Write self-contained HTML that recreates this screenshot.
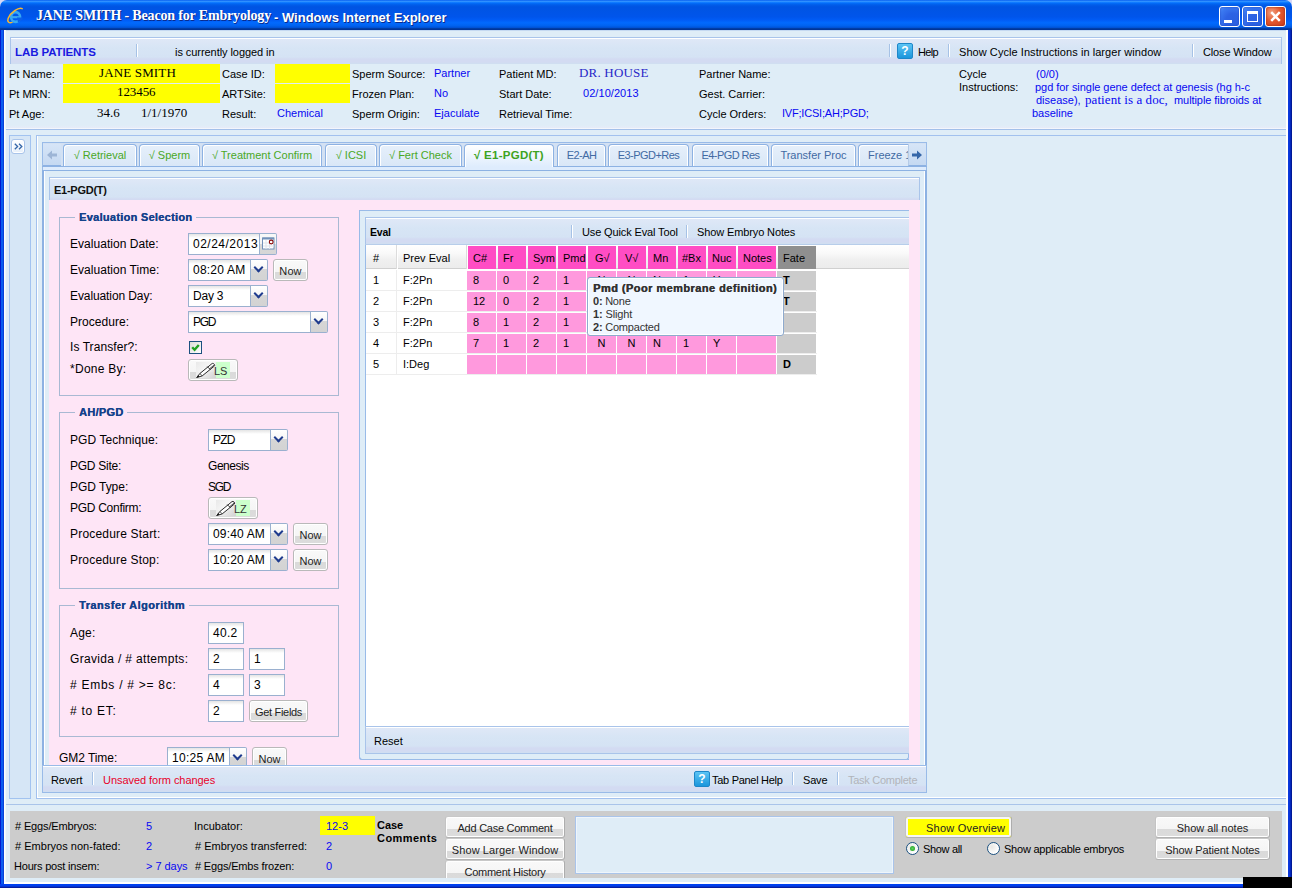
<!DOCTYPE html>
<html>
<head>
<meta charset="utf-8">
<title>JANE SMITH - Beacon for Embryology</title>
<style>
*{box-sizing:border-box;margin:0;padding:0}
html,body{width:1292px;height:888px;overflow:hidden}
html{background:#fff}
body{position:relative;background:#0a4fe0;font-family:"Liberation Sans",sans-serif;font-size:11px;color:#000}
.a{position:absolute}
.t{position:absolute;white-space:nowrap;font-size:11px;line-height:14px;color:#000}
.b{color:#0808f2}
.l{position:absolute;white-space:nowrap;font-size:12px;line-height:16px;color:#000;letter-spacing:.1px}
.tb{background:linear-gradient(#e0e8f7 0,#d7e5f5 10px,#d5e3f4 19px,#d3dbf2 21px,#d3dbf2 24px,#cfdff1 26px,#cfdff1 100%);border:1px solid #a9c4ea}
.sep{position:absolute;width:2px;border-left:1px solid #a6c2e6;border-right:1px solid #fff}
.in{position:absolute;background:#fff linear-gradient(#e4e4e4,#fff 4px);border:1px solid #9ab0cf;font-size:12px;line-height:21px;padding-left:4px;white-space:nowrap;letter-spacing:.3px;color:#000;overflow:hidden}
.tr{position:absolute;width:17px;height:22px;border:1px solid #9ab0cf;border-left:none;border-radius:0 2px 2px 0;background:linear-gradient(#fff 0%,#f6f6f6 43%,#d6d6d6 44%,#d3d3d3 100%)}
.tr:after{content:"";position:absolute;box-sizing:border-box;left:4.1px;top:3.6px;width:7px;height:7px;border-right:2.7px solid #1f3b8e;border-bottom:2.7px solid #1f3b8e;transform:rotate(45deg)}
.btn{position:absolute;border:1px solid #b9b9b9;border-radius:3px;background:linear-gradient(#f9f9f9 0%,#f5f5f5 59%,#dadada 60%,#dcdcdc 100%);box-shadow:inset 0 0 0 1px #fff;font-size:11px;line-height:23px;text-align:center;color:#222;white-space:nowrap}
.sb{border-color:#c8c8c8 #adadad #b2b2b2 #c4c4c4}
.fs{position:absolute;border:1px solid #a9b9d3}
.lg{position:absolute;text-shadow:.35px 0 0 #15428b;font-weight:bold;font-size:11px;line-height:14px;color:#15428b;background:#fee5f6;padding:0 4px;white-space:nowrap;letter-spacing:.2px}
</style>
</head>
<body>
<!-- title bar -->
<div class="a" style="left:0;top:0;width:8px;height:8px;background:#d5d8f8"></div><div class="a" style="left:1284px;top:0;width:8px;height:8px;background:#d5d8f8"></div>
<div class="a" id="title" style="left:0;top:0;width:1292px;height:30px;background:linear-gradient(to bottom,#0058ee 0%,#3593ff 4%,#288eff 6%,#127dff 8%,#036ffc 10%,#0262ee 14%,#0057e5 20%,#0054e3 24%,#0055eb 56%,#005bf5 66%,#026afe 76%,#0062ef 86%,#0052d6 92%,#0040ab 94%,#003092 100%);border-radius:7px 7px 0 0"></div>
<svg class="a" style="left:6px;top:6px" width="19" height="19" viewBox="0 0 19 19">
<ellipse cx="9.6" cy="11" rx="4.5" ry="4.9" fill="none" stroke="#38a8f2" stroke-width="2.6"/>
<path d="M5.5 11.2h8.5" stroke="#38a8f2" stroke-width="2.2"/>
<path d="M11 11.6l5.5 0 0 2.2-4.5 2.6z" fill="#0a60ea"/>
<path d="M16.2 2.6C12.5 1 4.5 6.5 2.2 12.2c-1.3 3.4.8 5.2 3.8 4.2" fill="none" stroke="#f8b830" stroke-width="1.5" stroke-linecap="round"/>
</svg>
<div class="a" style="left:36px;top:6px;font-family:'Liberation Serif',serif;font-weight:bold;font-size:14px;letter-spacing:-.16px;line-height:20px;color:#fff;white-space:nowrap;text-shadow:1px 1px 0 #0a2a8c" id="tt1">JANE SMITH - Beacon for Embryology</div>
<div class="a" style="left:274px;top:8px;font-weight:bold;font-size:13px;line-height:20px;color:#fff;white-space:nowrap;text-shadow:1px 1px 0 #0a2a8c" id="tt2">- Windows Internet Explorer</div>
<!-- window buttons -->
<div class="a" style="left:1219px;top:6px;width:21px;height:21px;border:1px solid #fff;border-radius:3px;background:radial-gradient(circle at 70% 75%,#2a5fe0 0%,#2d62e4 40%,#3a78f0 75%,#5590f8 100%);box-shadow:inset 0 0 2px #1b3fb8"><div class="a" style="left:4px;top:13px;width:8px;height:3px;background:#fff"></div></div>
<div class="a" style="left:1242px;top:6px;width:21px;height:21px;border:1px solid #fff;border-radius:3px;background:radial-gradient(circle at 70% 75%,#2a5fe0 0%,#2d62e4 40%,#3a78f0 75%,#5590f8 100%);box-shadow:inset 0 0 2px #1b3fb8"><div class="a" style="left:4px;top:4px;width:11px;height:11px;border:1px solid #fff;border-top:3px solid #fff"></div></div>
<div class="a" style="left:1265px;top:6px;width:21px;height:21px;border:1px solid #fff;border-radius:3px;background:radial-gradient(circle at 30% 30%,#f0a080 0%,#e4592e 45%,#c6391a 100%);box-shadow:inset 0 0 2px #8a2510"><svg class="a" style="left:3px;top:3px" width="13" height="13" viewBox="0 0 13 13"><path d="M2.2 2.2l8.6 8.6M10.8 2.2l-8.6 8.6" stroke="#fff" stroke-width="2.5" stroke-linecap="butt"/></svg></div>
<!-- window borders -->
<div class="a" style="left:0;top:30px;width:4px;height:858px;background:linear-gradient(to right,#0019cf 0,#0019cf 1px,#0a5cf0 1px,#0a5cf0 3px,#0742d8 3px)"></div>
<div class="a" style="left:1288px;top:30px;width:4px;height:858px;background:linear-gradient(to right,#0a3ddc 0,#0831d9 2px,#001ea0 3px,#00138c 4px)"></div>
<div class="a" style="left:0;top:884px;width:1292px;height:4px;background:linear-gradient(#0041f2 0,#0040ee 2px,#0a28b4 3px,#00138c 4px)"></div>
<!-- content -->
<div class="a" id="content" style="left:4px;top:30px;width:1284px;height:854px;background:#dfedf7;border-left:1px solid #fbfdfe;border-right:2px solid #fff;box-shadow:inset 1px 0 0 #eef6fb"></div>
<!-- header panel -->
<div class="a" style="left:6px;top:30px;width:1280px;height:100px;border-bottom:1px solid #a3c0ea;border-top:1px solid #c5d9f1;background:linear-gradient(#dfedf7 0,#dfedf7 94px,#e6ecf8 97px,#fff 98px)"></div>
<div class="a tb" style="left:10px;top:37px;width:1272px;height:27px;border-bottom:none;box-shadow:inset 0 1px 0 #fff"></div>
<div class="t" id="h1" style="left:15px;top:45px;font-weight:bold;font-size:11.5px;color:#1a1ae0;letter-spacing:-.1px">LAB PATIENTS</div>
<div class="sep" style="left:136px;top:44px;height:13px"></div>
<div class="t" id="h2" style="letter-spacing:-0.06px;left:175px;top:45px">is currently logged in</div>
<div class="sep" style="left:889px;top:44px;height:13px"></div>
<div class="a" style="left:897px;top:43px;width:16px;height:16px;border-radius:2px;border:1px solid #1d87c9;background:linear-gradient(#5cc4f4,#1b96dc);color:#fff;font-weight:bold;font-size:12px;line-height:14px;text-align:center">?</div>
<div class="t" id="h3" style="letter-spacing:-0.66px;left:918px;top:45px">Help</div>
<div class="sep" style="left:948px;top:44px;height:13px"></div>
<div class="t" id="h4" style="letter-spacing:0.06px;left:959px;top:45px">Show Cycle Instructions in larger window</div>
<div class="sep" style="left:1192px;top:44px;height:13px"></div>
<div class="t" id="h5" style="letter-spacing:-0.15px;left:1203px;top:45px">Close Window</div>
<!-- patient rows -->
<div class="a" style="left:63px;top:64px;width:157px;height:19px;background:#ffff00"></div>
<div class="a" style="left:63px;top:84px;width:157px;height:19px;background:#ffff00"></div>
<div class="a" style="left:275px;top:64px;width:75px;height:19px;background:#ffff00"></div>
<div class="a" style="left:275px;top:84px;width:75px;height:19px;background:#ffff00"></div>
<div class="t" id="p1" style="left:9px;top:67px">Pt Name:</div>
<div class="t" id="p2" style="left:9px;top:87px">Pt MRN:</div>
<div class="t" id="p3" style="left:9px;top:107px">Pt Age:</div>
<div class="t" id="p4" style="letter-spacing:0.15px;left:99px;top:66px;font-family:'Liberation Serif',serif;font-size:13px">JANE SMITH</div>
<div class="t" id="p5" style="letter-spacing:-0.08px;left:117px;top:85px;font-family:'Liberation Serif',serif;font-size:13px">123456</div>
<div class="t" id="p6" style="left:97px;top:106px;font-family:'Liberation Serif',serif;font-size:13px">34.6</div>
<div class="t" id="p7" style="left:141px;top:106px;font-family:'Liberation Serif',serif;font-size:13px">1/1/1970</div>
<div class="t" id="p8" style="left:222px;top:67px">Case ID:</div>
<div class="t" id="p9" style="left:222px;top:87px">ARTSite:</div>
<div class="t" id="p10" style="left:222px;top:107px">Result:</div>
<div class="t b" id="p11" style="left:277px;top:106px">Chemical</div>
<div class="t" id="p12" style="left:352px;top:67px">Sperm Source:</div>
<div class="t" id="p13" style="left:352px;top:87px">Frozen Plan:</div>
<div class="t" id="p14" style="left:352px;top:107px">Sperm Origin:</div>
<div class="t b" id="p15" style="left:434px;top:66px">Partner</div>
<div class="t b" id="p16" style="left:434px;top:86px">No</div>
<div class="t b" id="p17" style="left:434px;top:106px">Ejaculate</div>
<div class="t" id="p18" style="left:499px;top:67px">Patient MD:</div>
<div class="t" id="p19" style="left:499px;top:87px">Start Date:</div>
<div class="t" id="p20" style="left:499px;top:107px">Retrieval Time:</div>
<div class="t" id="p21" style="left:579px;top:66px;letter-spacing:.2px;font-family:'Liberation Serif',serif;font-size:13px;color:#2828c8">DR. HOUSE</div>
<div class="t b" id="p22" style="letter-spacing:0.06px;left:583px;top:86px">02/10/2013</div>
<div class="t" id="p23" style="left:699px;top:67px">Partner Name:</div>
<div class="t" id="p24" style="left:699px;top:87px">Gest. Carrier:</div>
<div class="t" id="p25" style="left:699px;top:107px">Cycle Orders:</div>
<div class="t b" id="p26" style="left:782px;top:106px;letter-spacing:-.2px">IVF;ICSI;AH;PGD;</div>
<div class="t" id="p27" style="left:959px;top:67px">Cycle</div>
<div class="t" id="p28" style="left:959px;top:80px">Instructions:</div>
<div class="t b" id="p29" style="left:1036px;top:67px">(0/0)</div>
<div class="t b" id="p30" style="letter-spacing:-0.05px;left:1035px;top:80px">pgd for single gene defect at genesis (hg h-c</div>
<div class="t b" id="p31" style="left:1036px;top:93px">disease),</div>
<div class="t b" id="p32" style="letter-spacing:0.08px;left:1085px;top:93px;font-family:'Liberation Serif',serif;font-size:13px">patient is a doc,</div>
<div class="t b" id="p33" style="letter-spacing:-0.07px;left:1174px;top:93px">multiple fibroids at</div>
<div class="t b" id="p34" style="left:1032px;top:106px">baseline</div>
<!-- left collapsed -->
<div class="a" style="left:9px;top:135px;width:22px;height:664px;border:1px solid #a2c3f0;background:#d6e6f6"></div>
<div class="a" style="left:11px;top:139px;width:14px;height:15px;border:1px solid #a9c4ea;border-radius:3px;background:linear-gradient(#fff,#e6effa);box-shadow:inset 0 0 0 1px #fff"><svg class="a" style="left:2px;top:3px" width="9" height="7" viewBox="0 0 9 7"><path d="M.8.8L3.6 3.5.8 6.2M5 .8l2.8 2.7L5 6.2" fill="none" stroke="#3566a8" stroke-width="1.3"/></svg></div>
<!-- center panel -->
<div class="a" style="left:36px;top:135px;width:1250px;height:664px;border:1px solid #a2c1ee;border-right:none;background:#dfedf7;box-shadow:inset 1px -1px 0 #fff"></div>
<!-- tab panel -->
<div class="a" style="left:42px;top:142px;width:885px;height:25px;border:1px solid #99bbe8;background:#d3e1f3"></div>
<div class="a" style="left:42px;top:167px;width:885px;height:3px;border:1px solid #99bbe8;border-top:none;border-bottom:none;background:#deecfd"></div>
<div class="a" style="left:42px;top:166px;width:885px;height:1px;background:#8db2e3"></div>
<div class="a" style="left:42px;top:170px;width:885px;height:596px;border:1px solid #8db2e3;border-left-width:2px;border-right-width:2px;background:#dfedf7;box-shadow:inset -1px 0 0 #fff,inset 1px 0 0 #fff"></div>
<style>
.tab{position:absolute;top:144px;height:22px;border:1px solid #8db2e3;border-bottom:none;border-radius:4px 4px 0 0;background:linear-gradient(#e6f0fb,#d9e7f7);box-shadow:inset 1px 1px 0 #fff,inset -1px 0 0 #fff;font-size:11px;line-height:21px;text-align:center;color:#416aa3;white-space:nowrap;overflow:hidden}
.tab.g{color:#4aa826}
.tab.act{height:23px;font-size:11.5px;letter-spacing:.25px;background:linear-gradient(#fff,#deecfd);font-weight:bold;color:#3da322;z-index:2}
</style>
<div class="a" style="left:43px;top:144px;width:18px;height:22px;border-bottom:1px solid #8db2e3;background:linear-gradient(#d6e5f7,#c5d9f2)"><svg class="a" style="left:4px;top:6px" width="10" height="10" viewBox="0 0 10 10"><path d="M0 5l5-4.5v3h5v3H5v3z" fill="#9db5d6"/></svg></div>
<div class="tab g" style="left:63px;width:74px"><span id="tb1">√ Retrieval</span></div>
<div class="tab g" style="left:139px;width:61px"><span id="tb2">√ Sperm</span></div>
<div class="tab g" style="left:202px;width:120px"><span id="tb3">√ Treatment Confirm</span></div>
<div class="tab g" style="left:325px;width:52px"><span id="tb4">√ ICSI</span></div>
<div class="tab g" style="left:379px;width:83px"><span id="tb5">√ Fert Check</span></div>
<div class="tab act" style="left:464px;width:90px"><span id="tb6">√ E1-PGD(T)</span></div>
<div class="tab" style="left:557px;width:49px"><span id="tb7" style="letter-spacing:-.55px">E2-AH</span></div>
<div class="tab" style="left:608px;width:81px"><span id="tb8" style="letter-spacing:-.55px">E3-PGD+Res</span></div>
<div class="tab" style="left:692px;width:77px"><span id="tb9" style="letter-spacing:-.55px">E4-PGD Res</span></div>
<div class="tab" style="left:771px;width:85px"><span id="tb10">Transfer Proc</span></div>
<div class="tab" style="left:858px;width:51px;text-align:left;padding-left:9px;border-right:none;border-radius:4px 0 0 0;box-shadow:inset 1px 1px 0 #fff"><span id="tb11">Freeze 1</span></div>
<div class="a" style="left:908px;top:144px;width:18px;height:22px;border-bottom:1px solid #8db2e3;border-left:1px solid #b5cbe8;background:linear-gradient(#d6e5f7,#c5d9f2);z-index:3"><svg class="a" style="left:3px;top:6px" width="10" height="10" viewBox="0 0 10 10"><path d="M10 5L5 .5v3H0v3h5v3z" fill="#3566a8"/></svg></div>
<!-- inner panel -->
<div class="a tb" style="left:49px;top:177px;width:871px;height:23px;border-bottom:none;box-shadow:inset 0 1px 0 #fff"></div>
<div class="t" id="ih" style="left:54px;top:183px;font-weight:bold;color:#111;letter-spacing:-.25px">E1-PGD(T)</div>
<div class="a" id="pink" style="left:49px;top:200px;width:871px;height:565px;background:#fee5f6"></div>
<!-- fieldset 1 -->
<div class="fs" style="left:59px;top:217px;width:280px;height:179px"></div>
<div class="lg" id="lg1" style="letter-spacing:0.28px;left:75px;top:210px">Evaluation Selection</div>
<div class="l" id="f1" style="letter-spacing:0.04px;left:70px;top:236px">Evaluation Date:</div>
<div class="l" id="f2" style="letter-spacing:0.04px;left:70px;top:262px">Evaluation Time:</div>
<div class="l" id="f3" style="letter-spacing:-0.1px;left:70px;top:288px">Evaluation Day:</div>
<div class="l" id="f4" style="letter-spacing:0.03px;left:70px;top:314px">Procedure:</div>
<div class="l" id="f5" style="letter-spacing:0.07px;left:70px;top:339px">Is Transfer?:</div>
<div class="l" id="f6" style="letter-spacing:0.27px;left:70px;top:361px">*Done By:</div>
<div class="in" style="left:188px;top:233px;width:72px;height:22px"><span id="i1" style="letter-spacing:0.5px">02/24/2013</span></div>
<div class="a" style="left:260px;top:233px;width:17px;height:22px;border:1px solid #9ab0cf;border-left:none;border-radius:0 2px 2px 0;background:linear-gradient(#f8f8f8 0%,#f4f4f4 49%,#d8d8d8 50%,#d6d6d6 100%)"><svg class="a" style="left:2px;top:3px" width="13" height="13" viewBox="0 0 13 13"><rect x=".5" y="1" width="11.5" height="11" fill="#fff" stroke="#7391b9"/><rect x=".5" y=".5" width="11.5" height="2" fill="#7391b9"/><path d="M4 3v9M7.5 3v9M1 6h11M1 9h11" stroke="#dfe4ec" stroke-width="1"/><circle cx="9.2" cy="5" r="1.9" fill="#fff" stroke="#8b0a0a" stroke-width="1.1"/></svg></div>
<div class="in" style="left:188px;top:259px;width:63px;height:22px"><span id="i2" style="letter-spacing:0.22px">08:20 AM</span></div><div class="tr" style="left:251px;top:259px"></div>
<div class="btn" style="left:273px;top:259px;width:35px;height:22px"><span id="b1" style="letter-spacing:0.09px">Now</span></div>
<div class="in" style="left:188px;top:285px;width:63px;height:22px"><span id="i3" style="letter-spacing:-0.23px">Day 3</span></div><div class="tr" style="left:251px;top:285px"></div>
<div class="in" style="left:188px;top:311px;width:123px;height:22px"><span id="i4" style="letter-spacing:-1.24px">PGD</span></div><div class="tr" style="left:311px;top:311px"></div>
<div class="a" style="left:189px;top:341px;width:13px;height:13px;border:1px solid #1c5180;background:linear-gradient(135deg,#dcdcd7,#fff)"><svg class="a" style="left:1px;top:1px" width="9" height="9" viewBox="0 0 9 9"><path d="M1.2 4.2l2.4 2.6L7.8 2" fill="none" stroke="#21a121" stroke-width="2.4"/></svg></div>
<div class="btn" style="left:188px;top:359px;width:50px;height:22px"></div>
<div class="a" style="left:196px;top:362px;width:20px;height:16px;background:linear-gradient(135deg,#e6e6e6 0%,#f6f6f6 45%,#f0f0f0 55%,#cfcfcf 100%);opacity:.85"></div>
<div class="a" style="left:216px;top:362px;width:14px;height:16px;background:#ccffcc"></div>
<svg class="a" style="left:196px;top:362px" width="20" height="16" viewBox="0 0 20 16"><path d="M3.9 11.5L15.9 1.7C17.2 .6 19.5 2.8 18.3 4.1L6.2 13.9L.6 15.6z" fill="#fff" stroke="#2a2a2a" stroke-width="1"/><path d="M.6 15.6l1.7-2.6 1.3 1.7z" fill="#1a1a1a"/><path d="M3.9 11.5l2.3 2.4" stroke="#2a2a2a" stroke-width=".8"/><path d="M11.3 4.6l3.2 3.2M13.3 7l4.6-3.8" stroke="#2a2a2a" stroke-width=".9" fill="none"/></svg>
<div class="t" id="ls" style="left:214px;top:364px;font-size:11px;color:#333">LS</div>
<!-- fieldset 2 -->
<div class="fs" style="left:59px;top:412px;width:280px;height:177px"></div>
<div class="lg" id="lg2" style="letter-spacing:0.27px;left:75px;top:405px">AH/PGD</div>
<div class="l" id="f7" style="letter-spacing:0.07px;left:70px;top:432px">PGD Technique:</div>
<div class="l" id="f8" style="letter-spacing:-0.26px;left:70px;top:458px">PGD Site:</div>
<div class="l" id="f9" style="letter-spacing:-0.03px;left:70px;top:479px">PGD Type:</div>
<div class="l" id="f10" style="letter-spacing:-0.28px;left:70px;top:500px">PGD Confirm:</div>
<div class="l" id="f11" style="letter-spacing:0.19px;left:70px;top:526px">Procedure Start:</div>
<div class="l" id="f12" style="letter-spacing:0.18px;left:70px;top:552px">Procedure Stop:</div>
<div class="in" style="left:208px;top:429px;width:63px;height:22px"><span id="i5" style="letter-spacing:-0.83px">PZD</span></div><div class="tr" style="left:271px;top:429px"></div>
<div class="l" id="f13" style="letter-spacing:-0.45px;left:208px;top:458px">Genesis</div>
<div class="l" id="f14" style="letter-spacing:-1.24px;left:208px;top:479px">SGD</div>
<div class="btn" style="left:208px;top:497px;width:50px;height:22px"></div>
<div class="a" style="left:216px;top:500px;width:20px;height:16px;background:linear-gradient(135deg,#e6e6e6 0%,#f6f6f6 45%,#f0f0f0 55%,#cfcfcf 100%);opacity:.85"></div>
<div class="a" style="left:236px;top:500px;width:14px;height:16px;background:#ccffcc"></div>
<svg class="a" style="left:216px;top:500px" width="20" height="16" viewBox="0 0 20 16"><path d="M3.9 11.5L15.9 1.7C17.2 .6 19.5 2.8 18.3 4.1L6.2 13.9L.6 15.6z" fill="#fff" stroke="#2a2a2a" stroke-width="1"/><path d="M.6 15.6l1.7-2.6 1.3 1.7z" fill="#1a1a1a"/><path d="M3.9 11.5l2.3 2.4" stroke="#2a2a2a" stroke-width=".8"/><path d="M11.3 4.6l3.2 3.2M13.3 7l4.6-3.8" stroke="#2a2a2a" stroke-width=".9" fill="none"/></svg>
<div class="t" id="lz" style="left:234px;top:502px;font-size:11px;color:#333">LZ</div>
<div class="in" style="left:208px;top:523px;width:63px;height:22px"><span id="i6" style="letter-spacing:0.16px">09:40 AM</span></div><div class="tr" style="left:271px;top:523px"></div>
<div class="btn" style="left:293px;top:523px;width:35px;height:22px">Now</div>
<div class="in" style="left:208px;top:549px;width:63px;height:22px"><span id="i7" style="letter-spacing:0.16px">10:20 AM</span></div><div class="tr" style="left:271px;top:549px"></div>
<div class="btn" style="left:293px;top:549px;width:35px;height:22px">Now</div>
<!-- fieldset 3 -->
<div class="fs" style="left:59px;top:605px;width:280px;height:132px"></div>
<div class="lg" id="lg3" style="letter-spacing:0.44px;left:75px;top:598px">Transfer Algorithm</div>
<div class="l" id="f15" style="letter-spacing:0.2px;left:70px;top:625px">Age:</div>
<div class="l" id="f16" style="letter-spacing:0.33px;left:70px;top:651px">Gravida / # attempts:</div>
<div class="l" id="f17" style="letter-spacing:0.73px;left:70px;top:677px"># Embs / # &gt;= 8c:</div>
<div class="l" id="f18" style="letter-spacing:0.74px;left:70px;top:703px"># to ET:</div>
<div class="in" style="left:208px;top:622px;width:36px;height:22px">40.2</div>
<div class="in" style="left:208px;top:648px;width:36px;height:22px">2</div><div class="in" style="left:249px;top:648px;width:36px;height:22px">1</div>
<div class="in" style="left:208px;top:674px;width:36px;height:22px">4</div><div class="in" style="left:249px;top:674px;width:36px;height:22px">3</div>
<div class="in" style="left:208px;top:700px;width:36px;height:22px">2</div>
<div class="btn" style="left:249px;top:700px;width:59px;height:22px"><span id="b2" style="letter-spacing:-0.31px">Get Fields</span></div>
<!-- GM2 -->
<div class="l" id="f19" style="letter-spacing:-0.05px;left:59px;top:750px">GM2 Time:</div>
<div class="a" style="left:160px;top:745px;width:140px;height:20px;overflow:hidden">
<div class="in" style="left:7px;top:2px;width:63px;height:22px">10:25 AM</div><div class="tr" style="left:70px;top:2px"></div>
<div class="btn" style="left:92px;top:2px;width:35px;height:22px;line-height:23px">Now</div>
</div>
<!-- grid -->
<div class="a" style="left:359px;top:210px;width:550px;height:550px;border:1px solid #99bbe8;border-right:none;background:#dfedf7;border-radius:0 0 0 3px"></div>
<div class="a" style="left:359px;top:753px;width:550px;height:7px;border:1px solid #99bbe8;border-top:none;border-radius:0 0 3px 3px"></div>
<div class="a" style="left:365px;top:217px;width:544px;height:537px;border:1px solid #99bbe8;border-right:none;background:#fff"></div>
<div class="a tb" style="left:365px;top:217px;width:544px;height:28px;border-right:none;border-bottom:1px solid #b7cdea;box-shadow:inset 0 1px 0 #fff"></div>
<div class="t" id="g1" style="left:370px;top:225px;font-weight:bold;font-size:10.5px;letter-spacing:-.2px">Eval</div>
<div class="sep" style="left:571px;top:225px;height:13px"></div>
<div class="t" id="g2" style="letter-spacing:-0.13px;left:582px;top:225px">Use Quick Eval Tool</div>
<div class="sep" style="left:686px;top:225px;height:13px"></div>
<div class="t" id="g3" style="letter-spacing:-0.12px;left:697px;top:225px">Show Embryo Notes</div>
<div class="a" style="left:366px;top:245px;width:543px;height:24px;background:linear-gradient(#fff 0%,#f9f9f9 38%,#f0f0f0 62%,#ececec 100%);border-bottom:1px solid #d0d0d0"></div>
<div class="a" style="left:396px;top:245px;width:2px;height:24px;border-left:1px solid #dcdcdc;border-right:1px solid #fff"></div>
<div class="a" style="left:466px;top:245px;width:2px;height:24px;border-left:1px solid #dcdcdc;border-right:1px solid #fff"></div>
<div class="t" id="gh0" style="left:373px;top:251px">#</div>
<div class="t" id="gh1" style="left:403px;top:251px">Prev Eval</div>
<div class="a" style="left:468px;top:246px;width:28px;height:23px;background:#ff4dc4"></div>
<div class="t" style="left:473px;top:251px">C#</div>
<div class="a" style="left:498px;top:246px;width:28px;height:23px;background:#ff4dc4"></div>
<div class="t" style="left:503px;top:251px">Fr</div>
<div class="a" style="left:528px;top:246px;width:28px;height:23px;background:#ff4dc4"></div>
<div class="t" style="left:533px;top:251px">Sym</div>
<div class="a" style="left:558px;top:246px;width:28px;height:23px;background:#ff4dc4"></div>
<div class="t" style="left:563px;top:251px">Pmd</div>
<div class="a" style="left:588px;top:246px;width:28px;height:23px;background:#ff4dc4"></div>
<div class="t" style="left:595px;top:251px">G√</div>
<div class="a" style="left:618px;top:246px;width:28px;height:23px;background:#ff4dc4"></div>
<div class="t" style="left:625px;top:251px">V√</div>
<div class="a" style="left:648px;top:246px;width:28px;height:23px;background:#ff4dc4"></div>
<div class="t" style="left:653px;top:251px">Mn</div>
<div class="a" style="left:678px;top:246px;width:28px;height:23px;background:#ff4dc4"></div>
<div class="t" style="left:682px;top:251px">#Bx</div>
<div class="a" style="left:708px;top:246px;width:28px;height:23px;background:#ff4dc4"></div>
<div class="t" style="left:712px;top:251px">Nuc</div>
<div class="a" style="left:738px;top:246px;width:38px;height:23px;background:#ff4dc4"></div>
<div class="t" style="left:743px;top:251px">Notes</div>
<div class="a" style="left:778px;top:246px;width:38px;height:23px;background:#8f8f8f"></div>
<div class="t" style="left:783px;top:251px">Fate</div>
<div class="a" style="left:366px;top:290px;width:451px;height:2px;border-top:1px solid #ededed;background:#fff"></div>
<div class="t" style="left:373px;top:273px">1</div>
<div class="t" style="left:403px;top:273px">F:2Pn</div>
<div class="a" style="left:467px;top:271px;width:29px;height:19px;background:#ff99dd"></div>
<div class="t" style="left:473px;top:273px">8</div>
<div class="a" style="left:497px;top:271px;width:29px;height:19px;background:#ff99dd"></div>
<div class="t" style="left:503px;top:273px">0</div>
<div class="a" style="left:527px;top:271px;width:29px;height:19px;background:#ff99dd"></div>
<div class="t" style="left:533px;top:273px">2</div>
<div class="a" style="left:557px;top:271px;width:29px;height:19px;background:#ff99dd"></div>
<div class="t" style="left:563px;top:273px">1</div>
<div class="a" style="left:587px;top:271px;width:29px;height:19px;background:#ff99dd"></div>
<div class="t" style="left:587px;top:273px;width:29px;text-align:center">N</div>
<div class="a" style="left:617px;top:271px;width:29px;height:19px;background:#ff99dd"></div>
<div class="t" style="left:617px;top:273px;width:29px;text-align:center">N</div>
<div class="a" style="left:647px;top:271px;width:29px;height:19px;background:#ff99dd"></div>
<div class="t" style="left:653px;top:273px">N</div>
<div class="a" style="left:677px;top:271px;width:29px;height:19px;background:#ff99dd"></div>
<div class="t" style="left:683px;top:273px">1</div>
<div class="a" style="left:707px;top:271px;width:29px;height:19px;background:#ff99dd"></div>
<div class="t" style="left:713px;top:273px">Y</div>
<div class="a" style="left:737px;top:271px;width:39px;height:19px;background:#ff99dd"></div>
<div class="a" style="left:777px;top:271px;width:39px;height:19px;background:#cccccc"></div>
<div class="t" style="left:783px;top:273px;font-weight:bold">T</div>
<div class="a" style="left:366px;top:311px;width:451px;height:2px;border-top:1px solid #ededed;background:#fff"></div>
<div class="t" style="left:373px;top:294px">2</div>
<div class="t" style="left:403px;top:294px">F:2Pn</div>
<div class="a" style="left:467px;top:292px;width:29px;height:19px;background:#ff99dd"></div>
<div class="t" style="left:473px;top:294px">12</div>
<div class="a" style="left:497px;top:292px;width:29px;height:19px;background:#ff99dd"></div>
<div class="t" style="left:503px;top:294px">0</div>
<div class="a" style="left:527px;top:292px;width:29px;height:19px;background:#ff99dd"></div>
<div class="t" style="left:533px;top:294px">2</div>
<div class="a" style="left:557px;top:292px;width:29px;height:19px;background:#ff99dd"></div>
<div class="t" style="left:563px;top:294px">1</div>
<div class="a" style="left:587px;top:292px;width:29px;height:19px;background:#ff99dd"></div>
<div class="t" style="left:587px;top:294px;width:29px;text-align:center">N</div>
<div class="a" style="left:617px;top:292px;width:29px;height:19px;background:#ff99dd"></div>
<div class="t" style="left:617px;top:294px;width:29px;text-align:center">N</div>
<div class="a" style="left:647px;top:292px;width:29px;height:19px;background:#ff99dd"></div>
<div class="t" style="left:653px;top:294px">N</div>
<div class="a" style="left:677px;top:292px;width:29px;height:19px;background:#ff99dd"></div>
<div class="t" style="left:683px;top:294px">1</div>
<div class="a" style="left:707px;top:292px;width:29px;height:19px;background:#ff99dd"></div>
<div class="t" style="left:713px;top:294px">Y</div>
<div class="a" style="left:737px;top:292px;width:39px;height:19px;background:#ff99dd"></div>
<div class="a" style="left:777px;top:292px;width:39px;height:19px;background:#cccccc"></div>
<div class="t" style="left:783px;top:294px;font-weight:bold">T</div>
<div class="a" style="left:366px;top:332px;width:451px;height:2px;border-top:1px solid #ededed;background:#fff"></div>
<div class="t" style="left:373px;top:315px">3</div>
<div class="t" style="left:403px;top:315px">F:2Pn</div>
<div class="a" style="left:467px;top:313px;width:29px;height:19px;background:#ff99dd"></div>
<div class="t" style="left:473px;top:315px">8</div>
<div class="a" style="left:497px;top:313px;width:29px;height:19px;background:#ff99dd"></div>
<div class="t" style="left:503px;top:315px">1</div>
<div class="a" style="left:527px;top:313px;width:29px;height:19px;background:#ff99dd"></div>
<div class="t" style="left:533px;top:315px">2</div>
<div class="a" style="left:557px;top:313px;width:29px;height:19px;background:#ff99dd"></div>
<div class="t" style="left:563px;top:315px">1</div>
<div class="a" style="left:587px;top:313px;width:29px;height:19px;background:#ff99dd"></div>
<div class="t" style="left:587px;top:315px;width:29px;text-align:center">N</div>
<div class="a" style="left:617px;top:313px;width:29px;height:19px;background:#ff99dd"></div>
<div class="t" style="left:617px;top:315px;width:29px;text-align:center">N</div>
<div class="a" style="left:647px;top:313px;width:29px;height:19px;background:#ff99dd"></div>
<div class="t" style="left:653px;top:315px">N</div>
<div class="a" style="left:677px;top:313px;width:29px;height:19px;background:#ff99dd"></div>
<div class="t" style="left:683px;top:315px">1</div>
<div class="a" style="left:707px;top:313px;width:29px;height:19px;background:#ff99dd"></div>
<div class="t" style="left:713px;top:315px">Y</div>
<div class="a" style="left:737px;top:313px;width:39px;height:19px;background:#ff99dd"></div>
<div class="a" style="left:777px;top:313px;width:39px;height:19px;background:#cccccc"></div>
<div class="a" style="left:366px;top:353px;width:451px;height:2px;border-top:1px solid #ededed;background:#fff"></div>
<div class="t" style="left:373px;top:336px">4</div>
<div class="t" style="left:403px;top:336px">F:2Pn</div>
<div class="a" style="left:467px;top:334px;width:29px;height:19px;background:#ff99dd"></div>
<div class="t" style="left:473px;top:336px">7</div>
<div class="a" style="left:497px;top:334px;width:29px;height:19px;background:#ff99dd"></div>
<div class="t" style="left:503px;top:336px">1</div>
<div class="a" style="left:527px;top:334px;width:29px;height:19px;background:#ff99dd"></div>
<div class="t" style="left:533px;top:336px">2</div>
<div class="a" style="left:557px;top:334px;width:29px;height:19px;background:#ff99dd"></div>
<div class="t" style="left:563px;top:336px">1</div>
<div class="a" style="left:587px;top:334px;width:29px;height:19px;background:#ff99dd"></div>
<div class="t" style="left:587px;top:336px;width:29px;text-align:center">N</div>
<div class="a" style="left:617px;top:334px;width:29px;height:19px;background:#ff99dd"></div>
<div class="t" style="left:617px;top:336px;width:29px;text-align:center">N</div>
<div class="a" style="left:647px;top:334px;width:29px;height:19px;background:#ff99dd"></div>
<div class="t" style="left:653px;top:336px">N</div>
<div class="a" style="left:677px;top:334px;width:29px;height:19px;background:#ff99dd"></div>
<div class="t" style="left:683px;top:336px">1</div>
<div class="a" style="left:707px;top:334px;width:29px;height:19px;background:#ff99dd"></div>
<div class="t" style="left:713px;top:336px">Y</div>
<div class="a" style="left:737px;top:334px;width:39px;height:19px;background:#ff99dd"></div>
<div class="a" style="left:777px;top:334px;width:39px;height:19px;background:#cccccc"></div>
<div class="a" style="left:366px;top:374px;width:451px;height:2px;border-top:1px solid #ededed;background:#fff"></div>
<div class="t" style="left:373px;top:357px">5</div>
<div class="t" style="left:403px;top:357px">I:Deg</div>
<div class="a" style="left:467px;top:355px;width:29px;height:19px;background:#ff99dd"></div>
<div class="a" style="left:497px;top:355px;width:29px;height:19px;background:#ff99dd"></div>
<div class="a" style="left:527px;top:355px;width:29px;height:19px;background:#ff99dd"></div>
<div class="a" style="left:557px;top:355px;width:29px;height:19px;background:#ff99dd"></div>
<div class="a" style="left:587px;top:355px;width:29px;height:19px;background:#ff99dd"></div>
<div class="a" style="left:617px;top:355px;width:29px;height:19px;background:#ff99dd"></div>
<div class="a" style="left:647px;top:355px;width:29px;height:19px;background:#ff99dd"></div>
<div class="a" style="left:677px;top:355px;width:29px;height:19px;background:#ff99dd"></div>
<div class="a" style="left:707px;top:355px;width:29px;height:19px;background:#ff99dd"></div>
<div class="a" style="left:737px;top:355px;width:39px;height:19px;background:#ff99dd"></div>
<div class="a" style="left:777px;top:355px;width:39px;height:19px;background:#cccccc"></div>
<div class="t" style="left:783px;top:357px;font-weight:bold">D</div>
<div class="a" style="left:396px;top:270px;width:1px;height:105px;background:#ededed"></div>
<div class="a tb" style="left:365px;top:726px;width:544px;height:28px;border-right:none;box-shadow:inset 0 1px 0 #fff"></div>
<div class="t" id="g4" style="left:374px;top:734px">Reset</div>
<div class="a" style="left:587px;top:277px;width:197px;height:59px;border:1px solid #8eaace;border-radius:3px;background:#f0f7ff;box-shadow:inset 0 0 0 1px #fff;z-index:5"></div>
<div class="t" id="tp0" style="letter-spacing:0.45px;left:593px;top:281px;text-shadow:.4px 0 0 #333;font-weight:bold;color:#333;z-index:6">Pmd (Poor membrane definition)</div>
<div class="t" id="tp1" style="letter-spacing:-0.23px;left:593px;top:294px;z-index:6;color:#333"><b>0:</b> None</div>
<div class="t" id="tp2" style="letter-spacing:-0.12px;left:593px;top:307px;z-index:6;color:#333"><b>1:</b> Slight</div>
<div class="t" id="tp3" style="letter-spacing:-0.21px;left:593px;top:320px;z-index:6;color:#333"><b>2:</b> Compacted</div>
<!-- bbar -->
<div class="a tb" style="left:42px;top:765px;width:885px;height:28px;border-color:#99bbe8;box-shadow:inset 0 1px 0 #fff"></div>
<div class="t" id="bb1" style="letter-spacing:-0.15px;left:51px;top:773px">Revert</div>
<div class="sep" style="left:92px;top:772px;height:13px"></div>
<div class="t" id="bb2" style="letter-spacing:-0.05px;left:103px;top:773px;color:#e8002a">Unsaved form changes</div>
<div class="a" style="left:694px;top:771px;width:16px;height:16px;border-radius:2px;border:1px solid #1d87c9;background:linear-gradient(#5cc4f4,#1b96dc);color:#fff;font-weight:bold;font-size:12px;line-height:14px;text-align:center">?</div>
<div class="t" id="bb3" style="letter-spacing:-0.29px;left:712px;top:773px">Tab Panel Help</div>
<div class="sep" style="left:792px;top:772px;height:13px"></div>
<div class="t" id="bb4" style="letter-spacing:-0.19px;left:803px;top:773px">Save</div>
<div class="sep" style="left:837px;top:772px;height:13px"></div>
<div class="t" id="bb5" style="letter-spacing:-0.27px;left:848px;top:773px;color:#b2b4ba">Task Complete</div>
<!-- south panel -->
<div class="a" style="left:6px;top:804px;width:1280px;height:78px;border-top:1px solid #a9c4ea;background:#dfedf7"></div>
<div class="a" style="left:10px;top:811px;width:1272px;height:67px;background:#cccccc"></div>
<div class="t" id="s1" style="letter-spacing:-0.14px;left:15px;top:819px"># Eggs/Embryos:</div>
<div class="t" id="s2" style="letter-spacing:0.02px;left:15px;top:839px"># Embryos non-fated:</div>
<div class="t" id="s3" style="letter-spacing:-0.2px;left:14px;top:859px">Hours post insem:</div>
<div class="t b" style="left:146px;top:819px">5</div>
<div class="t b" style="left:146px;top:839px">2</div>
<div class="t b" id="s4" style="letter-spacing:-0.04px;left:146px;top:859px">&gt; 7 days</div>
<div class="t" id="s5" style="left:194px;top:819px">Incubator:</div>
<div class="t" id="s6" style="letter-spacing:0.01px;left:195px;top:839px"># Embryos transferred:</div>
<div class="t" id="s7" style="letter-spacing:-0.16px;left:195px;top:859px"># Eggs/Embs frozen:</div>
<div class="a" style="left:320px;top:816px;width:55px;height:19px;background:#ffff00"></div>
<div class="t b" id="s8" style="left:326px;top:819px">12-3</div>
<div class="t b" style="left:326px;top:839px">2</div>
<div class="t b" style="left:326px;top:859px">0</div>
<div class="t" id="s9" style="letter-spacing:-0.02px;left:377px;top:819px;font-weight:bold;line-height:13px">Case</div>
<div class="t" id="s10" style="letter-spacing:0.44px;left:377px;top:832px;font-weight:bold;line-height:13px">Comments</div>
<div class="a" style="left:440px;top:811px;width:130px;height:67px;overflow:hidden">
<div class="btn sb" style="left:5px;top:5px;width:120px;height:22px;line-height:22px"><span id="s11" style="letter-spacing:-0.26px">Add Case Comment</span></div>
<div class="btn sb" style="left:5px;top:27px;width:120px;height:22px;line-height:22px"><span id="s12" style="letter-spacing:0.11px">Show Larger Window</span></div>
<div class="btn sb" style="left:5px;top:49px;width:120px;height:22px;line-height:22px"><span id="s13" style="letter-spacing:-0.26px">Comment History</span></div>
</div>
<div class="a" style="left:575px;top:816px;width:319px;height:58px;border:1px solid #a9c4ea;background:#dfedf7;box-shadow:inset 0 0 0 1px #eef5fb"></div>
<div class="btn sb" style="left:905px;top:816px;width:107px;height:22px;background:#ffff00;box-shadow:inset 0 0 0 2px #f6f6f6;line-height:22px;text-align:left;padding-left:20px;font-size:11px"><span id="s14" style="letter-spacing:0.22px;">Show Overview</span></div>
<div class="a" style="left:906px;top:842px;width:13px;height:13px;border-radius:50%;border:1px solid #1c5180;background:radial-gradient(circle at 35% 35%,#e8e8e4,#fff 70%)"><div class="a" style="left:3px;top:3px;width:5px;height:5px;border-radius:50%;background:radial-gradient(#5fd35f,#1a9a1a)"></div></div>
<div class="l" id="s15" style="letter-spacing:-0.33px;left:923px;top:841px;font-size:11px">Show all</div>
<div class="a" style="left:987px;top:842px;width:13px;height:13px;border-radius:50%;border:1px solid #1c5180;background:radial-gradient(circle at 35% 35%,#e8e8e4,#fff 70%)"></div>
<div class="l" id="s16" style="letter-spacing:-0.23px;left:1004px;top:841px;font-size:11px">Show applicable embryos</div>
<div class="btn sb" style="left:1155px;top:816px;width:115px;height:22px;line-height:22px"><span id="s17" style="letter-spacing:0.0px">Show all notes</span></div>
<div class="btn sb" style="left:1155px;top:838px;width:115px;height:22px;line-height:22px"><span id="s18" style="letter-spacing:-0.12px">Show Patient Notes</span></div>
<div class="a" style="left:4px;top:882px;width:1284px;height:2px;background:#fff;z-index:8"></div>
<div class="a" style="left:1243px;top:877px;width:49px;height:11px;background:#000;z-index:9"></div>
</body>
</html>
